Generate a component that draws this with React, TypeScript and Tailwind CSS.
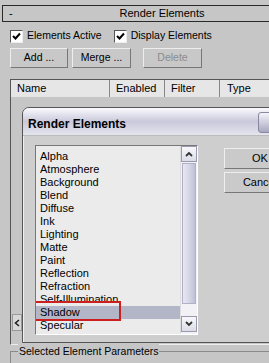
import React from "react";

const items = [
  "Alpha",
  "Atmosphere",
  "Background",
  "Blend",
  "Diffuse",
  "Ink",
  "Lighting",
  "Matte",
  "Paint",
  "Reflection",
  "Refraction",
  "Self-Illumination",
  "Shadow",
  "Specular",
];

function Check({ label }: { label: string }) {
  return (
    <div className="flex items-center gap-[4px]">
      <div className="w-[13px] h-[13px] bg-white border border-t-[#555] border-l-[#555] border-b-[#eee] border-r-[#eee] flex items-center justify-center">
        <svg width="9" height="9" viewBox="0 0 9 9">
          <path d="M1 4 L3.5 6.5 L8 1.5" stroke="#000" strokeWidth="2" fill="none" />
        </svg>
      </div>
      <span>{label}</span>
    </div>
  );
}

function Btn({ label, w, disabled }: { label: string; w: string; disabled?: boolean }) {
  return (
    <div
      className={
        "h-[20px] flex items-center justify-center border border-t-[#eee] border-l-[#eee] border-b-[#777] border-r-[#777] bg-[#c8c8c8] " +
        w +
        (disabled ? " text-[#8c8c8c]" : " text-black")
      }
    >
      {label}
    </div>
  );
}

export default function App() {
  return (
    <div
      className="relative w-[269px] h-[363px] overflow-hidden bg-[#c6c6c6] text-[10.5px] text-black"
      style={{ fontFamily: '"Liberation Sans", Arial, sans-serif' }}
    >
      {/* rollout header */}
      <div className="mt-[5px] ml-[2px] w-[320px] h-[17px] border border-[#2a2a2a] bg-[#c6c6c6] flex items-center relative">
        <span className="absolute left-[6px] top-0 h-full flex items-center text-[11px]">-</span>
        <span className="w-full text-center text-[11px]">Render Elements</span>
      </div>

      <div className="flex gap-[12px] ml-[10px] mt-[6px] h-[16px] items-center">
        <Check label="Elements Active" />
        <Check label="Display Elements" />
      </div>

      <div className="flex ml-[10px] mt-[4px] gap-[4px]">
        <Btn label="Add ..." w="w-[58px]" />
        <Btn label="Merge ..." w="w-[59px]" />
        <div className="w-[4px]" />
        <Btn label="Delete" w="w-[59px]" disabled />
      </div>

      {/* element list */}
      <div className="ml-[10px] mt-[11px] w-[300px] h-[266px] border border-t-[#555] border-l-[#555] border-b-[#eee] border-r-[#eee] bg-[#c6c6c6] flex flex-col">
        <div className="flex h-[17px] bg-[#e6e6e6] text-[11px]">
          <div className="w-[99px] pl-[6px] flex items-center border-r border-[#888]">Name</div>
          <div className="w-[55px] pl-[6px] flex items-center border-r border-[#888]">Enabled</div>
          <div className="w-[55px] pl-[6px] flex items-center border-r border-[#888]">Filter</div>
          <div className="flex-1 pl-[7px] flex items-center">Type</div>
        </div>
        <div className="flex-1" />
        <div className="h-[18px] flex items-start mb-[12px]">
          <div className="w-[10px] h-[17px] ml-[1px] bg-[#d8d8d8] border border-[#999] flex items-center justify-center">
            <svg width="6" height="8" viewBox="0 0 6 8">
              <path d="M5 1 L1.5 4 L5 7" stroke="#222" strokeWidth="1.6" fill="none" />
            </svg>
          </div>
        </div>
      </div>

      {/* group box */}
      <div className="relative ml-[10px] mt-[6px] h-[40px] border-l border-t border-[#8a8a8a]">
        <span className="absolute left-[7px] -top-[8px] bg-[#c6c6c6] px-[1px] text-[10.5px]">
          Selected Element Parameters
        </span>
      </div>

      {/* dialog */}
      <div className="absolute left-[22px] top-[107px] w-[262px] h-[236px] rounded-tl-[7px] border border-[#555] bg-[#cecece] flex flex-col overflow-hidden">
        <div className="h-[28px] bg-gradient-to-b from-[#fbfbff] via-[#c9c9dc] to-[#e4e4ee] flex items-center pl-[5px] pt-[4px] relative border-b border-[#bbb]">
          <span className="font-bold text-[12px]">Render Elements</span>
          <div className="absolute left-[235px] top-[4px] w-[21px] h-[21px] rounded-[3px] border border-[#8888a0] bg-gradient-to-b from-[#f4f4fa] to-[#a8a8c0]" />
        </div>
        <div className="flex-1 border-l border-[#f0f0f0] flex pl-[11px] pt-[9px]">
          {/* listbox */}
          <div className="shrink-0 w-[163px] h-[190px] border border-t-[#777] border-l-[#777] border-b-[#fff] border-r-[#fff] bg-[#ebebeb] flex">
            <div className="flex-1 pt-[4px] overflow-hidden text-[11px]">
              {items.map((it) => (
                <div
                  key={it}
                  className={
                    "h-[13px] leading-[13px] pl-[4px] relative " +
                    (it === "Shadow" ? "bg-[#b3b6c6]" : "")
                  }
                >
                  {it}
                  {it === "Shadow" && (
                    <div className="absolute -left-[3px] -top-[5px] w-[88px] h-[20px] border-2 border-[#cc1f1f]" />
                  )}
                </div>
              ))}
            </div>
            <div className="w-[17px] flex flex-col bg-[#f2f2f6] border-l border-[#ddd]">
              <div className="h-[16px] border border-[#9a9aae] bg-gradient-to-b from-[#f8f8fc] to-[#dcdce8] flex items-center justify-center">
                <svg width="8" height="6" viewBox="0 0 8 6">
                  <path d="M1 5 L4 2 L7 5" stroke="#333" strokeWidth="1.8" fill="none" />
                </svg>
              </div>
              <div className="h-[141px] mt-[1px] mx-[1px] border border-[#b0b0c8] bg-gradient-to-r from-[#e8e8f2] via-[#d6d6e6] to-[#c0c0d6]" />
              <div className="flex-1" />
              <div className="h-[16px] mb-[2px] border border-[#9a9aae] bg-gradient-to-b from-[#f8f8fc] to-[#dcdce8] flex items-center justify-center">
                <svg width="8" height="6" viewBox="0 0 8 6">
                  <path d="M1 1 L4 4 L7 1" stroke="#333" strokeWidth="1.8" fill="none" />
                </svg>
              </div>
            </div>
          </div>
          <div className="shrink-0 ml-[26px] mt-[3px] flex flex-col gap-[3px] text-[11px]">
            <div className="w-[72px] h-[21px] border border-t-[#eee] border-l-[#eee] border-b-[#777] border-r-[#777] bg-[#cacaca] flex items-center justify-center">
              OK
            </div>
            <div className="w-[72px] h-[21px] border border-t-[#eee] border-l-[#eee] border-b-[#777] border-r-[#777] bg-[#cacaca] flex items-center justify-center">
              Cancel
            </div>
          </div>
        </div>
      </div>
    </div>
  );
}
